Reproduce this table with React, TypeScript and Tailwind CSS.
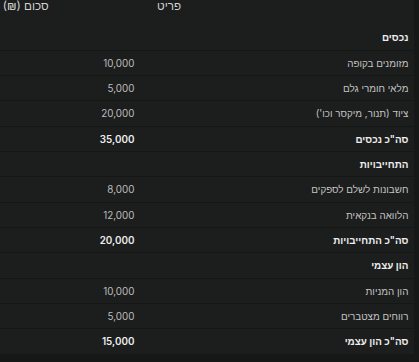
import React from 'react';

type Row =
  | { kind: 'section'; label: string }
  | { kind: 'item'; label: string; amount: string }
  | { kind: 'total'; label: string; amount: string };

const rows: Row[] = [
  { kind: 'section', label: 'נכסים' },
  { kind: 'item', label: 'מזומנים בקופה', amount: '10,000' },
  { kind: 'item', label: 'מלאי חומרי גלם', amount: '5,000' },
  { kind: 'item', label: "ציוד (תנור, מיקסר וכו')", amount: '20,000' },
  { kind: 'total', label: 'סה"כ נכסים', amount: '35,000' },
  { kind: 'section', label: 'התחייבויות' },
  { kind: 'item', label: 'חשבונות לשלם לספקים', amount: '8,000' },
  { kind: 'item', label: 'הלוואה בנקאית', amount: '12,000' },
  { kind: 'total', label: 'סה"כ התחייבויות', amount: '20,000' },
  { kind: 'section', label: 'הון עצמי' },
  { kind: 'item', label: 'הון המניות', amount: '10,000' },
  { kind: 'item', label: 'רווחים מצטברים', amount: '5,000' },
  { kind: 'total', label: 'סה"כ הון עצמי', amount: '15,000' },
];

export default function App() {
  return (
    <div
      dir="rtl"
      className="min-h-screen bg-[#161717] text-[9.85px] leading-[14px]"
      style={{ fontFamily: "Inter, 'Liberation Sans', sans-serif" }}
    >
      <div className="mr-auto w-[414px] bg-[#1c1d1d]">
        {/* Header (scrolled partly out of view) */}
        <div className="relative h-[25.33px] text-[11.7px] leading-[13px] text-[#d2d2d2]">
          <span className="absolute top-0 left-[157px]">פריט</span>
          <span className="absolute top-0 left-[2.7px]">סכום (₪)</span>
        </div>

        {rows.map((row, i) => (
          <div
            key={i}
            className="grid h-[25.33px] grid-cols-[1fr_140px] items-center border-b border-[#151616]"
          >
            <div
              className={
                row.kind === 'item'
                  ? 'px-[5.6px] text-[#c4c4c4]'
                  : 'px-[5.6px] font-semibold text-[#ededed]'
              }
            >
              {row.label}
            </div>
            <div
              className={
                row.kind === 'total'
                  ? 'px-[5.6px] font-semibold text-[#ededed]'
                  : 'px-[5.6px] text-[#bdbdbd]'
              }
            >
              {row.kind === 'section' ? '' : row.amount}
            </div>
          </div>
        ))}
      </div>
    </div>
  );
}
